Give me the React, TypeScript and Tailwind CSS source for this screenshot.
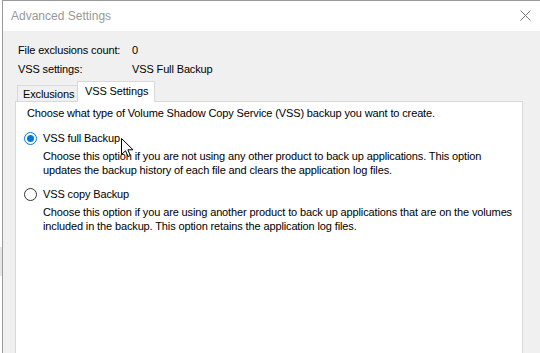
import React from 'react';

const font = { fontFamily: '"Liberation Sans", Arial, sans-serif' };

function Radio({ checked }: { checked?: boolean }) {
  return checked ? (
    <span className="flex h-[13px] w-[13px] items-center justify-center rounded-full border border-[#0078d7] bg-white">
      <span className="h-[7px] w-[7px] rounded-full bg-[#0078d7]" />
    </span>
  ) : (
    <span className="h-[13px] w-[13px] rounded-full border border-[#333333] bg-white" />
  );
}

function Option({
  checked,
  label,
  lines,
}: {
  checked?: boolean;
  label: string;
  lines: string[];
}) {
  return (
    <div className="flex flex-col">
      <div className="ml-[9px] flex h-[14px] items-center gap-[6px]">
        <Radio checked={checked} />
        <span>{label}</span>
      </div>
      <div className="ml-[28px] mt-[4px] flex flex-col">
        {lines.map((l) => (
          <div key={l} className="h-[14px] whitespace-nowrap">
            {l}
          </div>
        ))}
      </div>
    </div>
  );
}

export default function App() {
  return (
    <div
      className="relative flex h-[353px] w-[540px] overflow-hidden bg-white text-[11px] leading-[14px] tracking-[-0.13px] text-black"
      style={font}
    >
      {/* app behind the dialog */}
      <div className="flex w-[2px] flex-col bg-white">
        <div className="mt-[247px] h-[29px] bg-[#e6e6e6]" />
      </div>

      {/* dialog */}
      <div className="flex min-w-0 flex-1 flex-col border-l border-t border-[#9a9a9a]">
        <div className="flex h-[30px] shrink-0 items-center justify-between bg-white pl-[8px] pr-[9px] text-[12px] tracking-normal text-[#999999]">
          <span>Advanced Settings</span>
          <svg width="11" height="11" viewBox="0 0 11 11" className="mt-[-1px]">
            <path d="M0.5 0.5 L10.5 10.5 M10.5 0.5 L0.5 10.5" stroke="#777777" strokeWidth="1" fill="none" />
          </svg>
        </div>

        <div className="flex flex-1 flex-col bg-[#f0f0f0] px-[12px] pt-[12px]">
          <div className="ml-[3px] flex flex-col gap-[5px]">
            <div className="flex h-[14px]">
              <span className="w-[114px]">File exclusions count:</span>
              <span>0</span>
            </div>
            <div className="flex h-[14px]">
              <span className="w-[114px]">VSS settings:</span>
              <span>VSS Full Backup</span>
            </div>
          </div>

          {/* tabs */}
          <div className="mt-[5px] flex items-end pl-[2px]">
            <div className="flex h-[16px] w-[60px] items-center border border-b-0 border-r-0 border-[#d9d9d9] bg-[#f0f0f0] pl-[5px]">
              Exclusions
            </div>
            <div className="relative z-10 -mb-px flex h-[21px] w-[78px] items-start border border-b-0 border-[#d9d9d9] bg-white pl-[7px] pt-[2px]">
              VSS Settings
            </div>
          </div>

          <div className="flex h-[300px] w-[508px] shrink-0 flex-col border border-[#d9d9d9] bg-white pl-[11px]">
            <div className="mt-[4px] h-[14px]">
              Choose what type of Volume Shadow Copy Service (VSS) backup you want to create.
            </div>
            <div className="mt-[11px] ml-[-12px]">
              <Option
                checked
                label="VSS full Backup"
                lines={[
                  'Choose this option if you are not using any other product to back up applications. This option',
                  'updates the backup history of each file and clears the application log files.',
                ]}
              />
            </div>
            <div className="mt-[10px] ml-[-12px]">
              <Option
                label="VSS copy Backup"
                lines={[
                  'Choose this option if you are using another product to back up applications that are on the volumes',
                  'included in the backup. This option retains the application log files.',
                ]}
              />
            </div>
          </div>
        </div>
      </div>

      {/* mouse pointer */}
      <svg
        width="13"
        height="20"
        viewBox="0 0 13 20"
        className="absolute left-[121px] top-[138px]"
      >
        <path
          d="M0.5 0.5 L0.5 16.5 L4.5 12.8 L7 18.5 L9.3 17.5 L6.9 11.8 L12 11.8 Z"
          fill="#ffffff"
          stroke="#000000"
          strokeWidth="1"
          strokeLinejoin="miter"
        />
      </svg>
    </div>
  );
}
